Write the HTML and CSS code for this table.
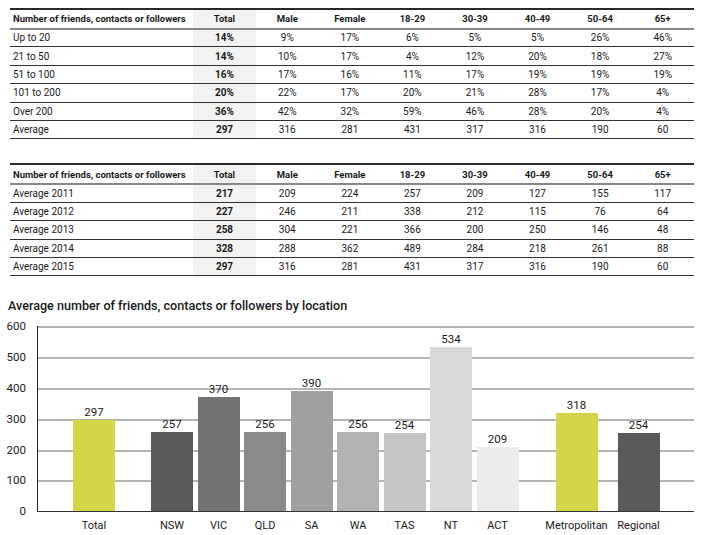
FILE: index.html
```html
<!DOCTYPE html>
<html lang="en">
<head>
<meta charset="utf-8">
<title>Friends, contacts or followers</title>
<link rel="stylesheet" href="styles.css">
</head>
<body>
<div class="page">
  <table class="data">
    <colgroup><col class="c-label"><col class="c-total"><col span="7" class="c-val"></colgroup>
    <thead>
      <tr><th class="label">Number of friends, contacts or followers</th><th class="total">Total</th><th>Male</th><th>Female</th><th>18-29</th><th>30-39</th><th>40-49</th><th>50-64</th><th>65+</th></tr>
    </thead>
    <tbody>
      <tr><td class="label">Up to 20</td><td class="total">14%</td><td>9%</td><td>17%</td><td>6%</td><td>5%</td><td>5%</td><td>26%</td><td>46%</td></tr>
      <tr><td class="label">21 to 50</td><td class="total">14%</td><td>10%</td><td>17%</td><td>4%</td><td>12%</td><td>20%</td><td>18%</td><td>27%</td></tr>
      <tr><td class="label">51 to 100</td><td class="total">16%</td><td>17%</td><td>16%</td><td>11%</td><td>17%</td><td>19%</td><td>19%</td><td>19%</td></tr>
      <tr><td class="label">101 to 200</td><td class="total">20%</td><td>22%</td><td>17%</td><td>20%</td><td>21%</td><td>28%</td><td>17%</td><td>4%</td></tr>
      <tr><td class="label">Over 200</td><td class="total">36%</td><td>42%</td><td>32%</td><td>59%</td><td>46%</td><td>28%</td><td>20%</td><td>4%</td></tr>
      <tr><td class="label">Average</td><td class="total">297</td><td>316</td><td>281</td><td>431</td><td>317</td><td>316</td><td>190</td><td>60</td></tr>
    </tbody>
  </table>

  <table class="data second">
    <colgroup><col class="c-label"><col class="c-total"><col span="7" class="c-val"></colgroup>
    <thead>
      <tr><th class="label">Number of friends, contacts or followers</th><th class="total">Total</th><th>Male</th><th>Female</th><th>18-29</th><th>30-39</th><th>40-49</th><th>50-64</th><th>65+</th></tr>
    </thead>
    <tbody>
      <tr><td class="label">Average 2011</td><td class="total">217</td><td>209</td><td>224</td><td>257</td><td>209</td><td>127</td><td>155</td><td>117</td></tr>
      <tr><td class="label">Average 2012</td><td class="total">227</td><td>246</td><td>211</td><td>338</td><td>212</td><td>115</td><td>76</td><td>64</td></tr>
      <tr><td class="label">Average 2013</td><td class="total">258</td><td>304</td><td>221</td><td>366</td><td>200</td><td>250</td><td>146</td><td>48</td></tr>
      <tr><td class="label">Average 2014</td><td class="total">328</td><td>288</td><td>362</td><td>489</td><td>284</td><td>218</td><td>261</td><td>88</td></tr>
      <tr><td class="label">Average 2015</td><td class="total">297</td><td>316</td><td>281</td><td>431</td><td>317</td><td>316</td><td>190</td><td>60</td></tr>
    </tbody>
  </table>

  <h2 class="chart-title">Average number of friends, contacts or followers by location</h2>

  <div class="chart">
    <div class="y-axis">
      <span>600</span><span>500</span><span>400</span><span>300</span><span>200</span><span>100</span><span>0</span>
    </div>
    <div class="plot">
      <div class="gridlines"><div></div><div></div><div></div><div></div><div></div><div></div></div>
      <div class="bars">
        <div class="bar-item first"><span class="val">297</span><div class="bar yellow" style="height:91.6px"></div></div>
        <div class="bar-item group"><span class="val">257</span><div class="bar g1" style="height:79.2px"></div></div>
        <div class="bar-item"><span class="val">370</span><div class="bar g2" style="height:114.1px"></div></div>
        <div class="bar-item"><span class="val">256</span><div class="bar g3" style="height:78.9px"></div></div>
        <div class="bar-item"><span class="val">390</span><div class="bar g4" style="height:120.3px"></div></div>
        <div class="bar-item"><span class="val">256</span><div class="bar g5" style="height:78.9px"></div></div>
        <div class="bar-item"><span class="val">254</span><div class="bar g6" style="height:78.3px"></div></div>
        <div class="bar-item"><span class="val">534</span><div class="bar g7" style="height:164.7px"></div></div>
        <div class="bar-item"><span class="val">209</span><div class="bar g8" style="height:64.4px"></div></div>
        <div class="bar-item metro"><span class="val">318</span><div class="bar yellow" style="height:98.1px"></div></div>
        <div class="bar-item regional"><span class="val">254</span><div class="bar g1" style="height:78.3px"></div></div>
      </div>
    </div>
  </div>
  <div class="x-labels">
    <span class="first">Total</span>
    <span class="group">NSW</span>
    <span>VIC</span>
    <span>QLD</span>
    <span>SA</span>
    <span>WA</span>
    <span>TAS</span>
    <span>NT</span>
    <span>ACT</span>
    <span class="metro">Metropolitan</span>
    <span class="regional">Regional</span>
  </div>
</div>
</body>
</html>
```

FILE: styles.css
```css
* { box-sizing: border-box; }
html, body { margin: 0; padding: 0; background: #fff; }
body {
  font-family: Roboto, "Liberation Sans", sans-serif;
  color: #1a1a1a;
}
.page { padding: 8px 12px 0 10px; width: 706px; }

.data {
  width: 684px;
  border-collapse: collapse;
  table-layout: fixed;
  font-size: 10px;
  border-top: 2px solid #2a2a2a;
}
.c-label { width: 183px; }
.c-total { width: 63px; }
.data th, .data td {
  padding: 0;
  text-align: center;
  border-bottom: 1px solid #333;
  white-space: nowrap;
}
.data th { height: 19.5px; font-size: 9.5px; font-weight: bold; border-bottom: 2px solid #888; }
.data td { height: 18.4px; }
.data .label { text-align: left; padding-left: 3px; }
.data .total { background: #f2f2f2; font-weight: bold; }
.second { margin-top: 24px; }

.chart-title {
  margin: 22px 0 0 -2px;
  font-size: 12.6px;
  line-height: 16px;
  font-weight: 500;
  color: #1a1a1a;
}

.chart { display: flex; margin-top: 12px; margin-left: -2px; }
.y-axis {
  width: 29px;
  height: 199px;
  margin-top: -7px;
  padding-right: 11px;
  display: flex;
  flex-direction: column;
  justify-content: space-between;
  align-items: flex-end;
  font-size: 11.5px;
  line-height: 14px;
}
.plot {
  width: 658px;
  height: 186px;
  border-left: 1px solid #222;
  border-bottom: 1px solid #333;
  display: grid;
}
.gridlines, .bars { grid-area: 1 / 1; }
.gridlines { display: flex; flex-direction: column; }
.gridlines div { height: 30.83px; border-top: 2px solid #b4b4b4; }
.bars { display: flex; align-items: flex-end; gap: 4.5px; padding-left: 35px; }
.bar-item { width: 42px; display: flex; flex-direction: column; align-items: center; }
.bar-item.group, .x-labels .group { margin-left: 31.5px; }
.bar-item.metro, .x-labels .metro { margin-left: 32.5px; }
.bar-item.regional, .x-labels .regional { margin-left: 15.5px; }
.val { font-size: 11.5px; line-height: 14px; margin-bottom: 1px; }
.bar { width: 42px; }
.yellow { background: #d4d548; }
.g1 { background: #5a5a5a; }
.g2 { background: #737373; }
.g3 { background: #8a8a8b; }
.g4 { background: #a0a0a1; }
.g5 { background: #b3b3b4; }
.g6 { background: #c6c6c7; }
.g7 { background: #d9d9da; }
.g8 { background: #ececec; }

.x-labels {
  display: flex;
  gap: 4.5px;
  margin-left: 63px;
  margin-top: 1px;
  font-size: 11px;
  line-height: 14px;
}
.x-labels span { width: 42px; display: flex; justify-content: center; white-space: nowrap; }
```
